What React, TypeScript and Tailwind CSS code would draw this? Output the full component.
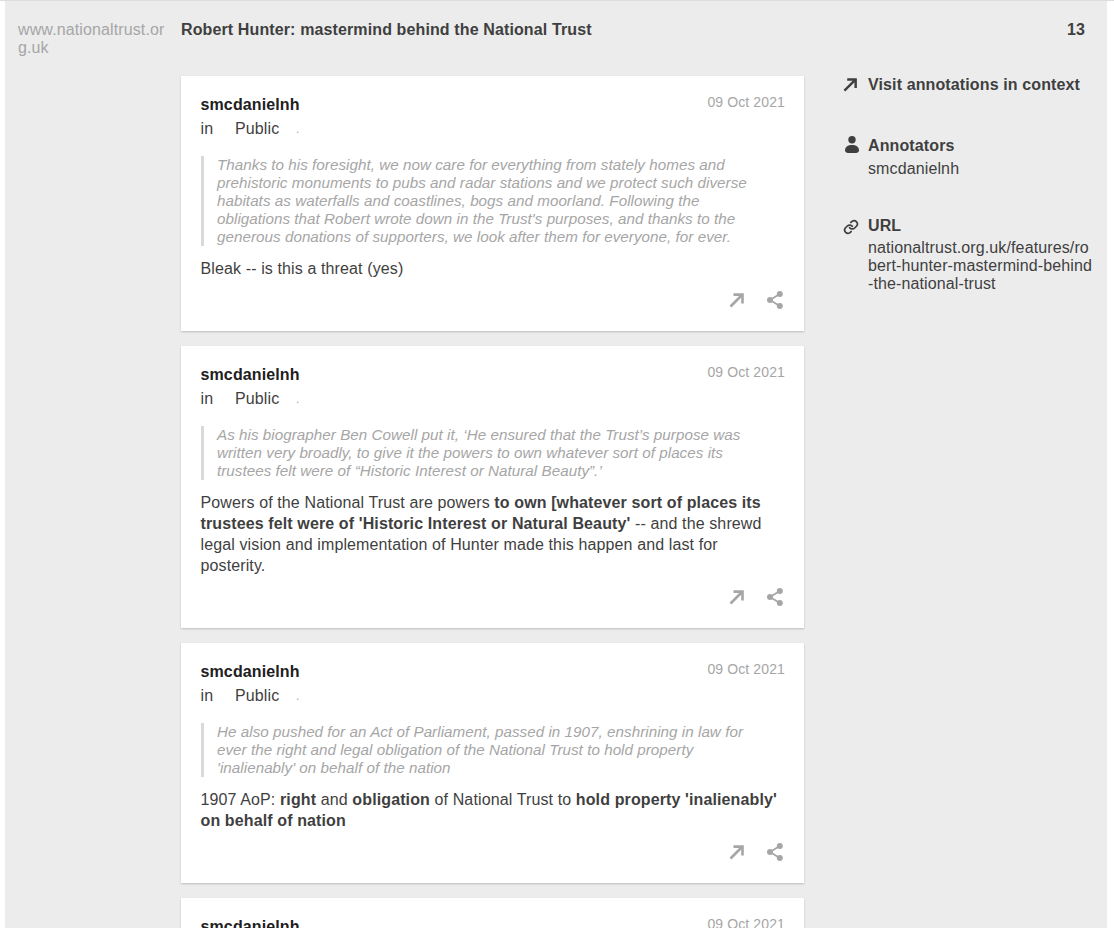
const ArrowIcon = ({ className }: { className: string }) => (
  <svg className={className} viewBox="0 0 16 16" fill="none" stroke="currentColor" strokeWidth={2.6}>
    <path d="M1.5 14.5 13 3" />
    <path d="M4.5 2.6h9v9" />
  </svg>
)

const ShareIcon = () => (
  <svg className="w-[16px] h-[18px] text-[#a6a6a6]" viewBox="0 0 16 18" fill="currentColor">
    <circle cx="12.8" cy="3" r="3" />
    <circle cx="3" cy="9" r="3" />
    <circle cx="12.8" cy="15" r="3" />
    <path d="M3 9 12.8 3M3 9l9.8 6" stroke="currentColor" strokeWidth={1.8} fill="none" />
  </svg>
)

const PersonIcon = () => (
  <svg className="w-[14px] h-[17px] text-[#3f3f3f]" viewBox="0 0 14 17" fill="currentColor">
    <circle cx="7" cy="3.7" r="3.7" />
    <path d="M0 14.5C0 10.8 3 9 7 9s7 1.8 7 5.5C14 16 12.5 17 11 17H3C1.5 17 0 16 0 14.5Z" />
  </svg>
)

const LinkIcon = () => (
  <svg
    className="w-[16px] h-[16px] text-[#3f3f3f]"
    viewBox="0 0 24 24"
    fill="none"
    stroke="currentColor"
    strokeWidth={2.6}
    strokeLinecap="round"
    strokeLinejoin="round"
  >
    <path d="M10 13a5 5 0 0 0 7.5.5l3-3a5 5 0 0 0-7-7l-1.7 1.7" />
    <path d="M14 11a5 5 0 0 0-7.5-.5l-3 3a5 5 0 0 0 7 7l1.7-1.7" />
  </svg>
)

function Card({ quote, children }: { quote?: React.ReactNode; children?: React.ReactNode }) {
  return (
    <div className="bg-white shadow-[0_1px_2px_rgba(0,0,0,0.2)] pl-[19.5px] pr-[19px] pt-[17px] pb-[22px] shrink-0">
      <div className="flex justify-between">
        <div className="font-bold text-[16px] leading-[24px] text-[#202020]">smcdanielnh</div>
        <div className="text-[14px] leading-[20px] text-[#a6a6a6] -mt-[1px]">09 Oct 2021</div>
      </div>
      <div className="flex text-[16px] leading-[24px] text-[#3f3f3f]">
        <span className="w-[34.5px]">in</span>
        <span className="w-[61px]">Public</span>
        <span className="text-[#a6a6a6] text-[12px]">.</span>
      </div>
      <blockquote className="mt-[15px] mr-[25px] border-l-[3px] border-[#d9d9d9] pl-[13.5px] italic text-[15.2px] leading-[18px] text-[#a6a6a6] tracking-[0.04px]">
        {quote}
      </blockquote>
      <div className="mt-[12px] text-[16px] leading-[21px] text-[#3f3f3f]">{children}</div>
      <div className="flex justify-end items-center gap-[22px] mt-[12px] mr-[2px] h-[18px]">
        <ArrowIcon className="w-[16px] h-[16px] text-[#a6a6a6]" />
        <ShareIcon />
      </div>
    </div>
  )
}

export default function App() {
  return (
    <div
      className="h-screen overflow-hidden bg-white pl-[5px] pr-[7px] border-t border-[#dcdcdc] tracking-[0.12px]"
      style={{ fontFamily: '"Liberation Sans", Arial, sans-serif' }}
    >
      <div className="h-full bg-[#ececec] pl-[13px] pr-[15px] pt-[20px]">
        {/* Header */}
        <div className="flex items-start text-[16px] leading-[18px]">
          <div className="w-[148px] break-all text-[#a6a6a6]">www.nationaltrust.org.uk</div>
          <div className="ml-[15px] flex-1 font-bold text-[#3f3f3f]">Robert Hunter: mastermind behind the National Trust</div>
          <div className="font-bold text-[#3f3f3f] mr-[7px]">13</div>
        </div>

        <div className="flex mt-[19px] items-start">
          {/* Annotation cards */}
          <div className="ml-[163px] w-[623px] shrink-0 flex flex-col gap-[15px]">
            <Card quote="Thanks to his foresight, we now care for everything from stately homes and prehistoric monuments to pubs and radar stations and we protect such diverse habitats as waterfalls and coastlines, bogs and moorland. Following the obligations that Robert wrote down in the Trust's purposes, and thanks to the generous donations of supporters, we look after them for everyone, for ever.">
              Bleak -- is this a threat (yes)
            </Card>
            <Card quote="As his biographer Ben Cowell put it, ‘He ensured that the Trust’s purpose was written very broadly, to give it the powers to own whatever sort of places its trustees felt were of “Historic Interest or Natural Beauty”.’">
              Powers of the National Trust are powers{" "}
              <b>to own [whatever sort of places its trustees felt were of 'Historic Interest or Natural Beauty'</b> -- and the
              shrewd legal vision and implementation of Hunter made this happen and last for posterity.
            </Card>
            <Card quote="He also pushed for an Act of Parliament, passed in 1907, enshrining in law for ever the right and legal obligation of the National Trust to hold property 'inalienably' on behalf of the nation">
              1907 AoP: <b>right</b> and <b>obligation</b> of National Trust to{" "}
              <b>hold property 'inalienably' on behalf of nation</b>
            </Card>
            <Card />
          </div>

          {/* Sidebar */}
          <div className="ml-[39px] flex-1 text-[16px] text-[#3f3f3f]">
            <div className="flex items-center gap-[10px] h-[18px]">
              <ArrowIcon className="w-[15px] h-[15px] text-[#3f3f3f] -mt-[2px]" />
              <span className="font-bold leading-[18px]">Visit annotations in context</span>
            </div>
            <div className="flex gap-[9px] mt-[40px] pl-[2px]">
              <div className="pt-[2px]">
                <PersonIcon />
              </div>
              <div>
                <div className="font-bold leading-[24px]">Annotators</div>
                <div className="leading-[22px]">smcdanielnh</div>
              </div>
            </div>
            <div className="flex gap-[9px] mt-[34px]">
              <div className="pt-[5px]">
                <LinkIcon />
              </div>
              <div className="w-[227px]">
                <div className="font-bold leading-[24px]">URL</div>
                <div className="leading-[18px] break-all pt-[1px]">nationaltrust.org.uk/features/robert-hunter-mastermind-behind-the-national-trust</div>
              </div>
            </div>
          </div>
        </div>
      </div>
    </div>
  )
}
